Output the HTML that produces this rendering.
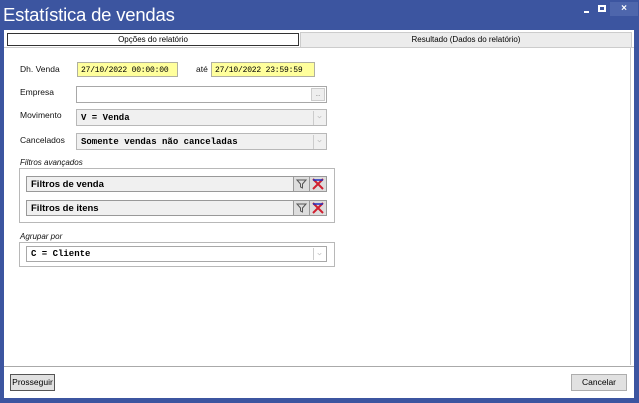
<!DOCTYPE html>
<html><head><meta charset="utf-8"><style>
*{margin:0;padding:0;box-sizing:border-box}
body{width:639px;height:403px;background:#3c55a0;position:relative;overflow:hidden;font-family:"Liberation Sans",sans-serif;font-size:8px;color:#000}
.a{position:absolute;white-space:nowrap}
.title{left:3px;top:4px;color:#fff;font-size:18.5px;letter-spacing:-0.2px}
.lbl{font-size:8.5px;color:#111}
.mono{font-family:"Liberation Mono",monospace;font-size:9px}
.in{background:#fff;border:1px solid #a8a8a8}
.yel{background:#ffff9c;border:1px solid #b0b0a0;padding:3px 0 0 3px;font-size:8px;letter-spacing:-0.2px}
.sel{background:#f0f0f0;border:1px solid #b8b8b8;padding:3px 0 0 4px;font-weight:bold}
.arr{position:absolute;right:1px;top:1px;width:12px;height:14px;border-left:1px solid #ccc;color:#aaa;font-size:7px;text-align:center;line-height:13px}
.box{border:1px solid #b8b8b8;background:#fff}
.row{background:#f0f0f0;border:1px solid #999;padding:2px 0 0 4px;font-weight:bold;font-size:9.5px}
.btn{background:#e1e1e1;border:1px solid #adadad;text-align:center;font-size:8.5px;line-height:15px}
</style></head><body>
<div class="a title">Estatística de vendas</div>
<div class="a" style="left:584px;top:11px;width:5px;height:2px;background:#fff"></div>
<div class="a" style="left:598px;top:5px;width:8px;height:7px;border:2px solid #fff"></div>
<div class="a" style="left:610px;top:2px;width:28px;height:14px;background:#4e66ac;color:#fff;font-size:10px;font-weight:bold;text-align:center;line-height:13px">×</div>

<div class="a" style="left:4px;top:30px;width:630px;height:337px;background:#fff"></div>
<div class="a" style="left:300px;top:32px;width:332px;height:16px;background:#ececec;border:1px solid #ccc;text-align:center;font-size:8px;line-height:14px">Resultado (Dados do relatório)</div>
<div class="a" style="left:7px;top:33px;width:292px;height:13px;background:#fff;border:1px solid #333;text-align:center;font-size:8px;line-height:11px">Opções do relatório</div>
<div class="a" style="left:4px;top:47px;width:630px;height:1px;background:#ccc"></div>
<div class="a" style="left:630px;top:47px;width:1px;height:318px;background:#ccc"></div>

<div class="a lbl" style="left:20px;top:64px">Dh. Venda</div>
<div class="a yel mono" style="left:77px;top:62px;width:101px;height:15px">27/10/2022 00:00:00</div>
<div class="a lbl" style="left:196px;top:64px">até</div>
<div class="a yel mono" style="left:211px;top:62px;width:104px;height:15px">27/10/2022 23:59:59</div>

<div class="a lbl" style="left:20px;top:87px">Empresa</div>
<div class="a in" style="left:76px;top:86px;width:251px;height:17px"><div class="a" style="right:1px;top:1px;width:14px;height:13px;background:#eee;border:1px solid #ccc;font-size:6px;color:#777;text-align:center;line-height:12px">...</div></div>

<div class="a lbl" style="left:20px;top:110px">Movimento</div>
<div class="a sel mono" style="left:76px;top:109px;width:251px;height:17px">V = Venda<div class="arr">⌵</div></div>
<div class="a lbl" style="left:20px;top:135px">Cancelados</div>
<div class="a sel mono" style="left:76px;top:133px;width:251px;height:17px">Somente vendas não canceladas<div class="arr">⌵</div></div>

<div class="a lbl" style="left:20px;top:158px;font-style:italic;font-size:8px">Filtros avançados</div>
<div class="a box" style="left:19px;top:168px;width:316px;height:55px"></div>
<div class="a row" style="left:26px;top:176px;width:301px;height:16px">Filtros de venda</div>
<div class="a row" style="left:26px;top:200px;width:301px;height:16px">Filtros de itens</div>
<svg class="a" style="left:293px;top:176px" width="34" height="40">
<g fill="#ddd" stroke="#999" stroke-width="1"><rect x="0.5" y="0.5" width="16" height="15"/><rect x="16.5" y="0.5" width="17" height="15"/><rect x="0.5" y="24.5" width="16" height="15"/><rect x="16.5" y="24.5" width="17" height="15"/></g>
<g fill="none" stroke="#555" stroke-width="1"><path d="M4 4h9l-3.5 4v4l-2-1v-3z"/><path d="M4 28h9l-3.5 4v4l-2-1v-3z"/></g>
<g stroke-width="2"><path d="M20 3l10 10M30 3l-10 10M20 27l10 10M30 27l-10 10" stroke="#d02030"/><path d="M20 4h10M20 28h10" stroke="#2030c0" stroke-width="1.5"/></g>
</svg>

<div class="a lbl" style="left:20px;top:232px;font-style:italic;font-size:8px">Agrupar por</div>
<div class="a box" style="left:19px;top:242px;width:316px;height:25px"></div>
<div class="a in mono" style="left:26px;top:246px;width:301px;height:16px;padding:2px 0 0 4px;font-weight:bold">C = Cliente<div class="arr" style="top:1px;height:12px">⌵</div></div>

<div class="a" style="left:4px;top:366px;width:630px;height:32px;background:#fff;border-top:1px solid #aaa"></div>
<div class="a btn" style="left:10px;top:374px;width:45px;height:17px;border:1px solid #555">Prosseguir</div>
<div class="a btn" style="left:571px;top:374px;width:56px;height:17px">Cancelar</div>
</body></html>
